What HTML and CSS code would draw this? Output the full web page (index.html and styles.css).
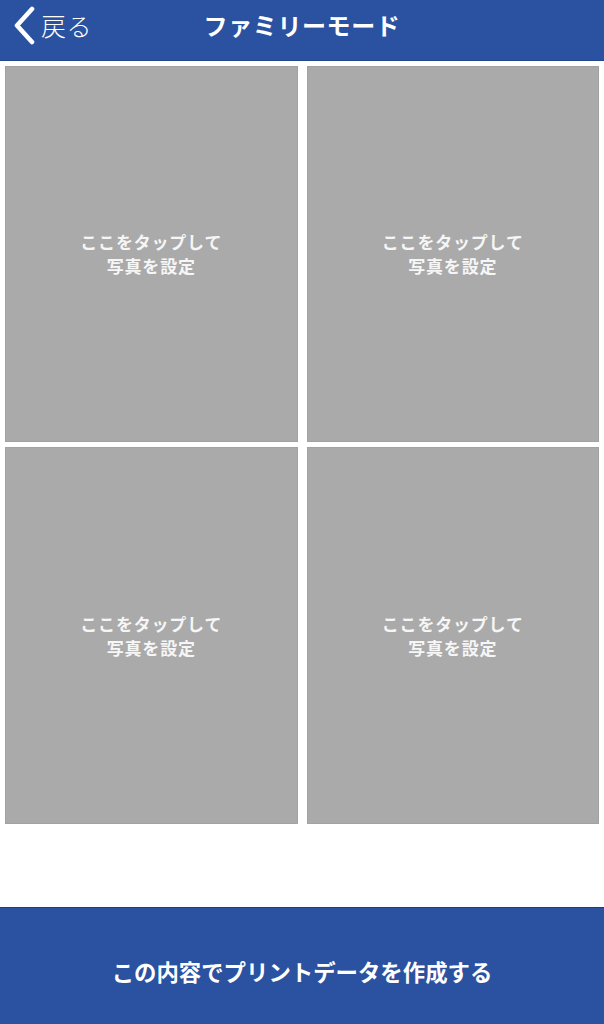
FILE: index.html
```html
<!DOCTYPE html>
<html lang="ja">
<head>
<meta charset="utf-8">
<title>ファミリーモード</title>
<link rel="stylesheet" href="styles.css">
</head>
<body>
<div class="screen">
  <header class="navbar">
    <a class="back" href="#">
      <svg class="chev" width="24" height="40" viewBox="0 0 24 40" aria-hidden="true">
        <polyline points="20,4 5,20.5 20,37" fill="none" stroke="#fff" stroke-width="4.6" stroke-linecap="round" stroke-linejoin="round"/>
      </svg>
      <span class="back-label">戻る</span>
    </a>
    <h1 class="title">ファミリーモード</h1>
  </header>
  <main class="content">
    <div class="grid">
      <div class="tile"><p>ここをタップして<br>写真を設定</p></div>
      <div class="tile"><p>ここをタップして<br>写真を設定</p></div>
      <div class="tile"><p>ここをタップして<br>写真を設定</p></div>
      <div class="tile"><p>ここをタップして<br>写真を設定</p></div>
    </div>
  </main>
  <footer class="action">
    <span class="action-label">この内容でプリントデータを作成する</span>
  </footer>
</div>
</body>
</html>
```
FILE: styles.css
```css
* { box-sizing: border-box; margin: 0; padding: 0; }
html, body { width: 604px; height: 1024px; overflow: hidden; background: #fff; }
body {
  font-family: "Noto Sans CJK JP", "Noto Sans", sans-serif;
  color: #fff;
}
.screen {
  display: flex;
  flex-direction: column;
  height: 1024px;
}
.navbar {
  position: relative;
  height: 61px;
  background: #2b51a1;
  border-bottom: 1px solid #23478f;
  display: flex;
  align-items: center;
  justify-content: center;
  flex-shrink: 0;
}
.back {
  position: absolute;
  left: 12px;
  top: 5px;
  display: flex;
  align-items: center;
  gap: 5px;
  color: #fff;
  text-decoration: none;
}
.chev { display: block; }
.back-label {
  font-size: 25px;
  font-weight: 300;
  line-height: 40px;
  letter-spacing: 0.5px;
}
.title {
  font-size: 24px;
  font-weight: 700;
  letter-spacing: 0.6px;
  line-height: 1;
  margin-top: -10px;
}
.content {
  flex: 1;
  padding: 5px 5px 0 5px;
}
.grid {
  display: grid;
  grid-template-columns: 1fr 1fr;
  grid-template-rows: 376px 377px;
  column-gap: 9px;
  row-gap: 5px;
}
.tile {
  background: #aaaaaa;
  border: 1px solid #a2a2a2;
  display: flex;
  align-items: center;
  justify-content: center;
  text-align: center;
}
.tile p {
  font-size: 17px;
  font-weight: 700;
  line-height: 24px;
  letter-spacing: 0.8px;
  color: #f6f6f6;
}
.action {
  height: 117px;
  flex-shrink: 0;
  background: #2b51a1;
  border-top: 1px solid #1f3d84;
  display: flex;
  align-items: center;
  justify-content: center;
  padding-top: 9px;
}
.action-label {
  font-size: 22.4px;
  font-weight: 700;
  letter-spacing: 0;
}
```
